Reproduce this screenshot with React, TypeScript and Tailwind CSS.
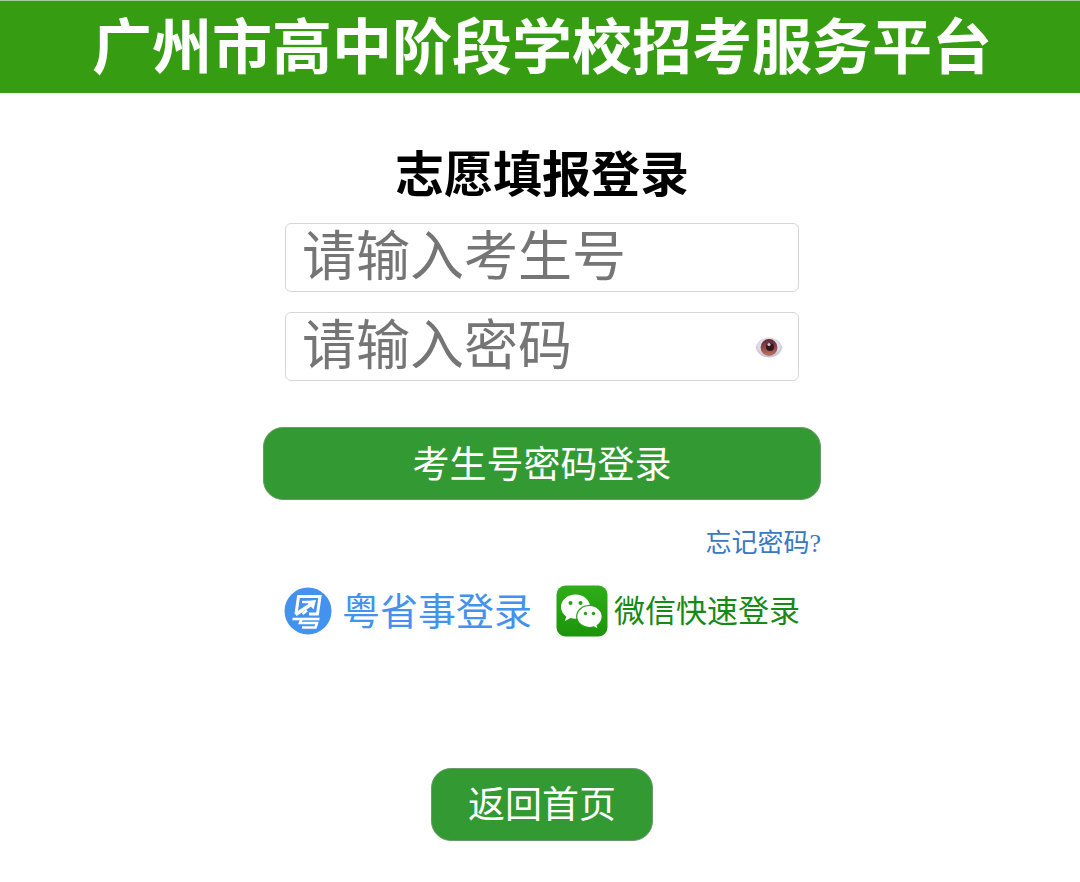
import { useState } from "react"
import type { FormEvent } from "react"

function EyeIcon() {
    return (
        <svg viewBox="0 0 28 24" className="w-7 h-6" aria-hidden="true">
            <defs>
                <radialGradient id="eye-white" cx="50%" cy="40%" r="65%">
                    <stop offset="0%" stopColor="#f4f1f6" />
                    <stop offset="60%" stopColor="#dfdae6" />
                    <stop offset="100%" stopColor="#bdb6ce" />
                </radialGradient>
                <linearGradient id="eye-iris" x1="0" y1="0" x2="0" y2="1">
                    <stop offset="0%" stopColor="#5e2430" />
                    <stop offset="100%" stopColor="#bd7361" />
                </linearGradient>
            </defs>
            <path d="M0.600 12.500C2.500 6 7.500 2.500 14 2.500s11.500 3.500 13.400 10C25.500 19 20.500 22.500 14 22.500S2.500 19 0.600 12.500z" fill="url(#eye-white)" />
            <circle cx="14" cy="12.500" r="8.400" fill="url(#eye-iris)" />
            <circle cx="15" cy="12" r="4" fill="#32161f" />
            <circle cx="14" cy="9.500" r="1.600" fill="#d3c4cc" />
        </svg>
    )
}

function YueIcon() {
    return (
        <svg viewBox="0 0 48 48" className="size-12 shrink-0" aria-hidden="true">
            <circle cx="24" cy="24" r="23.500" fill="#4292ee" />
            <g fill="none" stroke="#ffffff" strokeWidth="3">
                <path d="M12 27 14.500 9.500H36L33.500 27H25" />
                <path d="M18 15H24" strokeWidth="2.400" />
                <path d="M11.500 27.500 28.500 16.500" strokeWidth="3.600" />
                <path d="M18.500 27 23 23.500" strokeWidth="2.400" />
                <path d="M8.500 32H35.500" strokeWidth="2.600" />
                <path d="M17.500 32 16 36H33L31.500 40.500H18" strokeWidth="2.600" />
            </g>
            <path d="M22 14 32 13 29.500 22.500z" fill="#ffffff" />
        </svg>
    )
}

function WechatIcon() {
    return (
        <svg viewBox="0 0 52 52" className="size-[52px] shrink-0" aria-hidden="true">
            <defs>
                <linearGradient id="wechat-bg" x1="0" y1="0" x2="0" y2="1">
                    <stop offset="0%" stopColor="#2fae18" />
                    <stop offset="100%" stopColor="#1c930b" />
                </linearGradient>
            </defs>
            <rect x="0.500" y="0.500" width="51" height="51" rx="9" fill="url(#wechat-bg)" />
            <path d="M19.500 9.500C11.500 9.500 5 15 5 22c0 3.900 2 7.200 5.200 9.500L9 36l5.500-3c1.600.5 3.300.7 5 .7 8 0 14.500-5.200 14.500-11.900S27.500 9.500 19.500 9.500z" fill="#ffffff" />
            <circle cx="14.500" cy="18" r="2" fill="#27a114" />
            <circle cx="24.500" cy="18" r="2" fill="#27a114" />
            <path d="M33.500 20.500c-7.200 0-12.800 4.800-12.800 11S26.300 42.500 33.500 42.500c1.500 0 2.900-.2 4.200-.6l4.600 2.400-1.100-3.900c3-2 5-5.200 5-8.900 0-6.200-5.600-11-12.700-11z" fill="#ffffff" stroke="#249d12" strokeWidth="1.200" />
            <circle cx="29.500" cy="28.500" r="1.700" fill="#27a114" />
            <circle cx="37.500" cy="28.500" r="1.700" fill="#27a114" />
        </svg>
    )
}

export default function App() {
    const [examNumber, setExamNumber] = useState("")
    const [password, setPassword] = useState("")
    const [showPassword, setShowPassword] = useState(false)

    function handleSubmit(e: FormEvent) {
        e.preventDefault()
    }

    return (
        <div className="min-h-screen bg-white font-['Liberation_Sans','Noto_Sans_CJK_SC',sans-serif]">
            <header className="bg-[#369d12] border-t border-[#a5cf98] pl-1 pt-1">
                <h1 className="text-center text-white text-[60px] leading-[88px] font-bold">
                    广州市高中阶段学校招考服务平台
                </h1>
            </header>

            <main className="flex flex-col items-center pl-1 pb-10">
                <form onSubmit={handleSubmit} className="w-full max-w-[558px] flex flex-col mt-[50px]">
                    <h2 className="text-center text-black text-[49px] leading-[64px] font-bold">志愿填报登录</h2>

                    <div className="flex flex-col gap-5 px-[22px] mt-4">
                        <input
                            type="text"
                            aria-label="考生号"
                            placeholder="请输入考生号"
                            value={examNumber}
                            onChange={(e) => setExamNumber(e.target.value)}
                            className="w-full h-[69px] border border-[#d6d6d6] rounded-md px-4 pb-0.5 text-[54px] leading-[64px] placeholder:text-[#757575]"
                        />
                        <div className="relative">
                            <input
                                type={showPassword ? "text" : "password"}
                                aria-label="密码"
                                placeholder="请输入密码"
                                value={password}
                                onChange={(e) => setPassword(e.target.value)}
                                className="w-full h-[69px] border border-[#d6d6d6] rounded-md pl-4 pr-14 pb-0.5 text-[54px] leading-[64px] placeholder:text-[#757575]"
                            />
                            <button
                                type="button"
                                aria-label="显示密码"
                                onClick={() => setShowPassword(!showPassword)}
                                className="absolute inset-y-0 right-4 flex items-center"
                            >
                                <EyeIcon />
                            </button>
                        </div>
                    </div>

                    <button
                        type="submit"
                        className="w-full h-[73px] pt-1 mt-[46px] bg-[#339933] border border-[#6a9a6a] rounded-[20px] text-white text-[37px] leading-[56px]"
                    >
                        考生号密码登录
                    </button>

                    <a href="#" className="self-end mt-[26px] text-[#3a78c3] text-[26px] leading-9 font-['Liberation_Serif','Noto_Sans_CJK_SC',serif]">
                        忘记密码?
                    </a>
                </form>

                <div className="flex items-center gap-6 mt-[22px]">
                    <a href="#" className="flex items-center gap-2.5 text-[#4292ee] text-[38px] leading-[52px]">
                        <YueIcon />
                        <span className="pt-0.5">粤省事登录</span>
                    </a>
                    <a href="#" className="flex items-center gap-1.5 text-[#158a15] text-[31px] leading-[52px]">
                        <WechatIcon />
                        <span className="pt-0.5">微信快速登录</span>
                    </a>
                </div>

                <button
                    type="button"
                    className="h-[73px] pt-0.5 px-9 mt-[130px] bg-[#339933] border border-[#6a9a6a] rounded-[20px] text-white text-[37px] leading-[56px]"
                >
                    返回首页
                </button>
            </main>
        </div>
    )
}
